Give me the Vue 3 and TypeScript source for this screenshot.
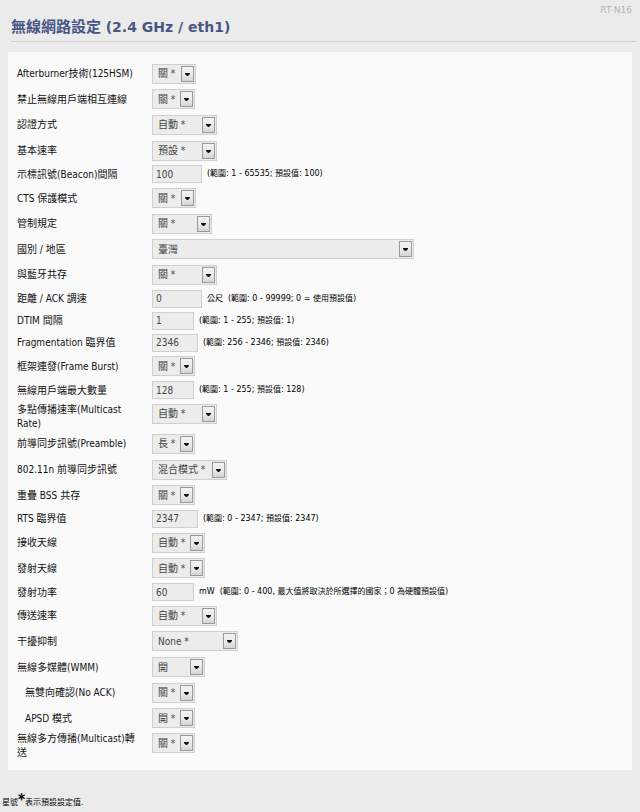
<script setup lang="ts">
interface Row {
  id: string
  label: string
  value: string
  kind: 'select' | 'input'
  width: number
  unit?: string
  hint?: string
  sub?: boolean
  tall?: boolean
}

const select = (id: string, label: string, value: string, width: number, extra: Partial<Row> = {}): Row =>
  ({ id, label, value, kind: 'select', width, ...extra })

const input = (id: string, label: string, value: string, width: number, hint: string, unit?: string): Row =>
  ({ id, label, value, kind: 'input', width, hint, unit })

const rows: Row[] = [
  select('afterburner', 'Afterburner技術(125HSM)', '關 *', 44),
  select('isolation', '禁止無線用戶端相互連線', '關 *', 43),
  select('auth', '認證方式', '自動 *', 65),
  select('basic-rate', '基本速率', '預設 *', 65),
  input('beacon', '示標訊號(Beacon)間隔', '100', 50, '(範圍: 1 - 65535; 預設值: 100)'),
  select('cts', 'CTS 保護模式', '關 *', 44),
  select('regulatory', '管制規定', '關 *', 60),
  select('country', '國別 / 地區', '臺灣', 262),
  select('bluetooth', '與藍牙共存', '關 *', 65),
  input('distance', '距離 / ACK 調速', '0', 50, '(範圍: 0 - 99999; 0 = 使用預設值)', '公尺'),
  input('dtim', 'DTIM 間隔', '1', 42, '(範圍: 1 - 255; 預設值: 1)'),
  input('fragmentation', 'Fragmentation 臨界值', '2346', 46, '(範圍: 256 - 2346; 預設值: 2346)'),
  select('frame-burst', '框架連發(Frame Burst)', '關 *', 43),
  input('max-clients', '無線用戶端最大數量', '128', 42, '(範圍: 1 - 255; 預設值: 128)'),
  select('multicast-rate', '多點傳播速率(Multicast Rate)', '自動 *', 65, { tall: true }),
  select('preamble', '前導同步訊號(Preamble)', '長 *', 43),
  select('n-preamble', '802.11n 前導同步訊號', '混合模式 *', 75),
  select('bss', '重疊 BSS 共存', '關 *', 43),
  input('rts', 'RTS 臨界值', '2347', 46, '(範圍: 0 - 2347; 預設值: 2347)'),
  select('rx-antenna', '接收天線', '自動 *', 53),
  select('tx-antenna', '發射天線', '自動 *', 53),
  input('tx-power', '發射功率', '60', 42, '(範圍: 0 - 400, 最大值將取決於所選擇的國家；0 為硬體預設值)', 'mW'),
  select('tx-rate', '傳送速率', '自動 *', 65),
  select('interference', '干擾抑制', 'None *', 86),
  select('wmm', '無線多媒體(WMM)', '開', 53),
  select('no-ack', '無雙向確認(No ACK)', '關 *', 43, { sub: true }),
  select('apsd', 'APSD 模式', '開 *', 43, { sub: true }),
  select('multicast', '無線多方傳播(Multicast)轉送', '關 *', 43, { tall: true }),
]
</script>

<template>
  <div class="page">
    <p class="model">RT-N16</p>
    <h1 class="title">無線網路設定 <span class="band">(2.4 GHz / eth1)</span></h1>
    <form class="card" @submit.prevent>
      <div v-for="row in rows" :key="row.id" class="row" :class="[row.kind, { tall: row.tall, sub: row.sub }]">
        <label class="label" :for="row.id">{{ row.label }}</label>
        <div class="control">
          <span v-if="row.kind === 'select'" class="picker" :style="{ width: row.width + 'px' }">
            <select :id="row.id">
              <option>{{ row.value }}</option>
            </select>
            <svg class="arrow" viewBox="0 0 13 16" aria-hidden="true">
              <defs>
                <linearGradient :id="row.id + '-face'" x1="0" y1="0" x2="0" y2="1">
                  <stop offset="0" stop-color="#f4f4f4" />
                  <stop offset="0.5" stop-color="#ebebeb" />
                  <stop offset="1" stop-color="#d3d3d3" />
                </linearGradient>
              </defs>
              <rect x="0.5" y="0.5" width="12" height="15" :fill="`url(#${row.id}-face)`" stroke="#999" />
              <path d="M4 7h5v1L7 10H6L4 8z" fill="#111" />
            </svg>
          </span>
          <template v-else>
            <input :id="row.id" type="text" :value="row.value" :style="{ width: row.width + 'px' }" />
            <small v-if="row.unit" class="hint">{{ row.unit }}</small>
            <small class="hint">{{ row.hint }}</small>
          </template>
        </div>
      </div>
    </form>
    <p class="note">星號<b>*</b>表示預設設定值.</p>
  </div>
</template>

<style>
body {
  background: #ebebeb;
}
</style>

<style scoped>
.page {
  box-sizing: border-box;
  min-height: 100vh;
  display: flex;
  flex-direction: column;
  padding: 4px 8px 0;
  font-family: 'DejaVu Sans Condensed', 'Noto Sans CJK TC', sans-serif;
  font-size: 10px;
  line-height: 14px;
  color: #111;
}
.model,
.band,
.hint {
  font-family: 'DejaVu Sans', 'Noto Sans CJK TC', sans-serif;
}
.model {
  margin: 0;
  font-size: 9px;
  line-height: 12px;
  text-align: right;
  color: #b4b4b4;
}
.title {
  margin: 0 -4px 10px 3px;
  padding-bottom: 3px;
  border-bottom: 1px solid #d0d0d0;
  font-size: 15px;
  line-height: 22px;
  color: #475686;
}
.band {
  font-size: 14px;
}
.card {
  flex: 1;
  display: flex;
  flex-direction: column;
  padding: 9px;
  background: #fafafa;
}
.row {
  display: grid;
  grid-template-columns: 120px 1fr;
  column-gap: 15px;
  align-items: center;
}
.row.select {
  flex: 1 0 25px;
}
.row.input {
  flex: 0 0 22px;
}
.row.tall {
  flex: 0 0 30px;
}
.label {
  padding-top: 1px;
}
.row.sub .label {
  padding-left: 8px;
}
.row.tall .control {
  align-self: start;
  height: 25px;
}
.control {
  display: flex;
  align-items: center;
  gap: 5px;
}
.picker {
  display: inline-grid;
  align-items: center;
}
.picker > * {
  grid-area: 1 / 1;
}
select,
input {
  box-sizing: border-box;
  margin: 0;
  border: 1px solid #cfcfcf;
  border-radius: 0;
  background: #ececec;
  font-family: inherit;
  font-size: 10px;
  color: #444;
}
select {
  appearance: none;
  width: 100%;
  height: 20px;
  padding: 0 0 0 5px;
}
input {
  height: 18px;
  padding: 0 3px;
}
.arrow {
  justify-self: end;
  width: 13px;
  height: 16px;
  margin-right: 2px;
  pointer-events: none;
}
.hint {
  font-size: 8px;
  color: #000;
}
.note {
  margin: 24px 0 0 -6px;
  font-size: 8px;
  line-height: 18px;
  color: #000;
}
.note b {
  font-size: 15px;
  line-height: 10px;
}
</style>
